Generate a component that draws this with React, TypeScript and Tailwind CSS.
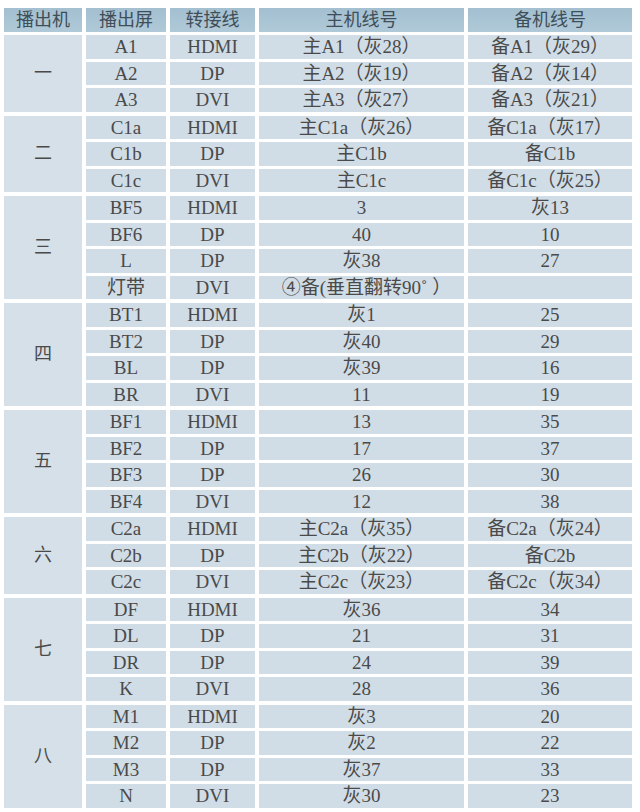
import React from "react"

type Row = [string, string, string, string]
type Group = { name: string; rows: Row[] }

const groups: Group[] = [
  {
    name: "一",
    rows: [
      ["A1", "HDMI", "主A1（灰28）", "备A1（灰29）"],
      ["A2", "DP", "主A2（灰19）", "备A2（灰14）"],
      ["A3", "DVI", "主A3（灰27）", "备A3（灰21）"],
    ],
  },
  {
    name: "二",
    rows: [
      ["C1a", "HDMI", "主C1a（灰26）", "备C1a（灰17）"],
      ["C1b", "DP", "主C1b", "备C1b"],
      ["C1c", "DVI", "主C1c", "备C1c（灰25）"],
    ],
  },
  {
    name: "三",
    rows: [
      ["BF5", "HDMI", "3", "灰13"],
      ["BF6", "DP", "40", "10"],
      ["L", "DP", "灰38", "27"],
      ["灯带", "DVI", "④备(垂直翻转90˚ ）", ""],
    ],
  },
  {
    name: "四",
    rows: [
      ["BT1", "HDMI", "灰1", "25"],
      ["BT2", "DP", "灰40", "29"],
      ["BL", "DP", "灰39", "16"],
      ["BR", "DVI", "11", "19"],
    ],
  },
  {
    name: "五",
    rows: [
      ["BF1", "HDMI", "13", "35"],
      ["BF2", "DP", "17", "37"],
      ["BF3", "DP", "26", "30"],
      ["BF4", "DVI", "12", "38"],
    ],
  },
  {
    name: "六",
    rows: [
      ["C2a", "HDMI", "主C2a（灰35）", "备C2a（灰24）"],
      ["C2b", "DP", "主C2b（灰22）", "备C2b"],
      ["C2c", "DVI", "主C2c（灰23）", "备C2c（灰34）"],
    ],
  },
  {
    name: "七",
    rows: [
      ["DF", "HDMI", "灰36", "34"],
      ["DL", "DP", "21", "31"],
      ["DR", "DP", "24", "39"],
      ["K", "DVI", "28", "36"],
    ],
  },
  {
    name: "八",
    rows: [
      ["M1", "HDMI", "灰3", "20"],
      ["M2", "DP", "灰2", "22"],
      ["M3", "DP", "灰37", "33"],
      ["N", "DVI", "灰30", "23"],
    ],
  },
]

const cols = "grid grid-cols-[78px_80px_85px_205px_164px] gap-x-[4px]"
const font = { fontFamily: '"Liberation Serif", "Noto Sans CJK SC", serif' }

export default function App() {
  return (
    <div className="h-[812px] w-[640px] bg-white pl-[4px] pt-[8px] text-[19px] text-[#4a4a4a]" style={font}>
      {/* header */}
      <div className={`${cols} h-[24px] text-[#3f4e58]`}>
        {["播出机", "播出屏", "转接线", "主机线号", "备机线号"].map((h) => (
          <div key={h} className="flex items-center justify-center bg-gradient-to-b from-[#a3bfd0] to-[#b0c9d8] text-[18px] leading-none">
            {h}
          </div>
        ))}
      </div>

      <div className="mt-[3px] flex flex-col gap-y-[4px]">
        {groups.map((g) => (
          <div key={g.name} className={`${cols} auto-rows-[23.5px] gap-y-[3px]`}>
            <div
              className="flex items-center justify-center bg-[#d5e0e9] text-[18px]"
              style={{ gridRow: `span ${g.rows.length} / span ${g.rows.length}` }}
            >
              {g.name}
            </div>
            {g.rows.map((r) =>
              r.map((c, i) => (
                <div
                  key={r[0] + i}
                  className={`flex items-center justify-center whitespace-nowrap bg-[#d1dde6] leading-none ${i === 2 && c.startsWith("④") ? "pl-[10px]" : ""}`}
                >
                  {c}
                </div>
              ))
            )}
          </div>
        ))}
      </div>
    </div>
  )
}
